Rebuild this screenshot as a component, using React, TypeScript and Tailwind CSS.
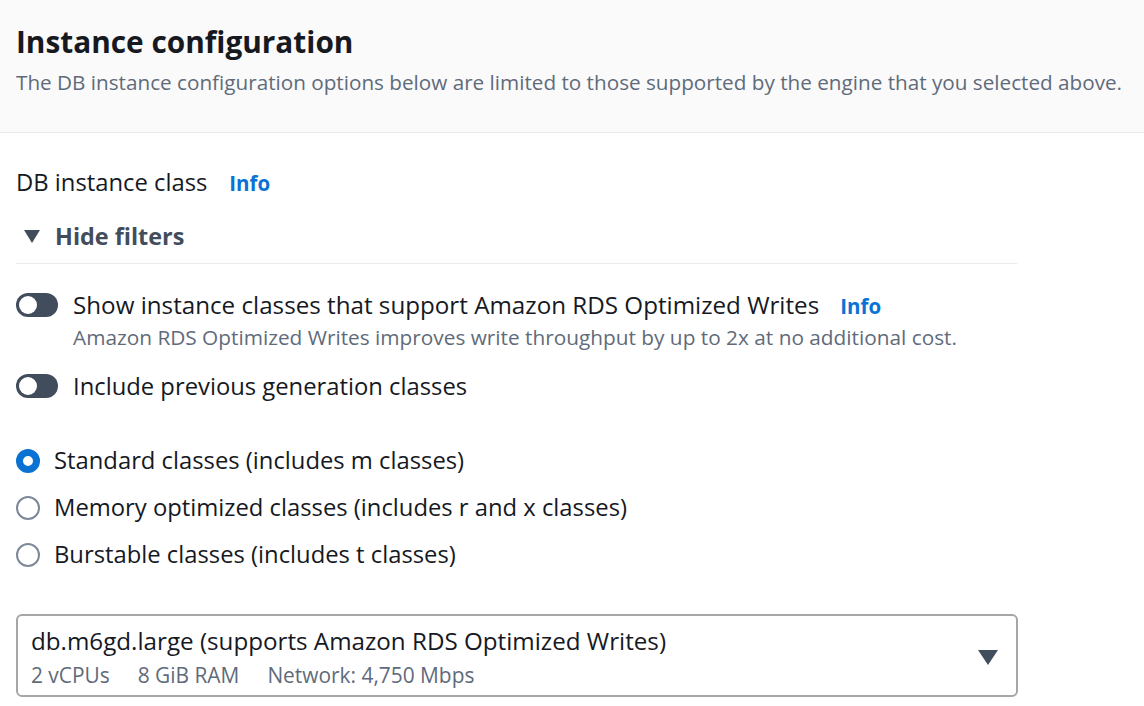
import React, { useState } from "react";

function Toggle({ on }: { on: boolean }) {
  return (
    <div
      className={`w-[42px] h-[24px] rounded-full flex items-center px-[3px] shrink-0 ${
        on ? "bg-[#0972d3] justify-end" : "bg-[#414d5c] justify-start"
      }`}
    >
      <div className="w-[18px] h-[18px] rounded-full bg-white" />
    </div>
  );
}

function Radio({ checked }: { checked: boolean }) {
  return checked ? (
    <div className="w-[24px] h-[24px] rounded-full border-[7px] border-[#0972d3] bg-white shrink-0" />
  ) : (
    <div className="w-[24px] h-[24px] rounded-full border-2 border-[#7d8998] bg-white shrink-0" />
  );
}

export default function App() {
  const [selected] = useState(0);
  const options = [
    "Standard classes (includes m classes)",
    "Memory optimized classes (includes r and x classes)",
    "Burstable classes (includes t classes)",
  ];
  return (
    <div className="w-[1144px] h-[706px] bg-white text-[#16191f] font-['Open_Sans',sans-serif] overflow-hidden">
      <div className="bg-[#fafafa] border-b border-[#e9ebed] px-[16px] pt-[22px] pb-[36px]">
        <h2 className="text-[29.8px] font-bold leading-[40px]">Instance configuration</h2>
        <p className="text-[20.7px] text-[#5f6b7a] leading-[28px] mt-[6px] whitespace-nowrap">
          The DB instance configuration options below are limited to those supported by the engine that you selected above.
        </p>
      </div>

      <div className="px-[16px] pt-[35px]">
        <div className="flex items-baseline gap-[22px] h-[28px]">
          <span className="text-[23.8px] leading-[28px]">DB instance class</span>
          <span className="text-[20.5px] leading-[28px] font-bold text-[#0972d3]">Info</span>
        </div>

        <div className="w-[1001px] mt-[26px] pb-[13px] border-b border-[#e9ebed] flex items-center gap-[15px]">
          <svg width="16" height="13" viewBox="0 0 16 13" className="ml-[8px]">
            <path d="M0 0h16L8 13z" fill="#414d5c" />
          </svg>
          <span className="text-[23.4px] font-bold text-[#414d5c] leading-[28px]">Hide filters</span>
        </div>

        <div className="mt-[27px] flex gap-[15px]">
          <div className="pt-[2px]">
            <Toggle on={false} />
          </div>
          <div>
            <div className="flex items-baseline gap-[21px] h-[28px]">
              <span className="text-[24.2px] leading-[28px] whitespace-nowrap">
                Show instance classes that support Amazon RDS Optimized Writes
              </span>
              <span className="text-[20.5px] leading-[28px] font-bold text-[#0972d3]">Info</span>
            </div>
            <div className="text-[20.8px] text-[#5f6b7a] leading-[28px] mt-[4px] whitespace-nowrap">
              Amazon RDS Optimized Writes improves write throughput by up to 2x at no additional cost.
            </div>
          </div>
        </div>

        <div className="mt-[21px] flex gap-[15px] items-center">
          <Toggle on={false} />
          <span className="text-[23.8px] leading-[28px]">Include previous generation classes</span>
        </div>

        <div className="mt-[46px] flex flex-col gap-[18px]">
          {options.map((o, i) => (
            <div key={o} className="flex items-center gap-[14px] h-[29px]">
              <Radio checked={i === selected} />
              <span className="text-[23.8px] leading-[29px]">{o}</span>
            </div>
          ))}
        </div>

        <div className="mt-[45px] w-[1002px] h-[83px] border-2 border-[#a6a6a6] rounded-[6px] pl-[13px] pr-[18px] pt-[10px] flex justify-between">
          <div>
            <div className="text-[24.2px] leading-[30px] whitespace-nowrap">
              db.m6gd.large (supports Amazon RDS Optimized Writes)
            </div>
            <div className="flex gap-[28px] text-[20.9px] text-[#5f6b7a] leading-[28px] mt-[5px]">
              <span>2 vCPUs</span>
              <span>8 GiB RAM</span>
              <span>Network: 4,750 Mbps</span>
            </div>
          </div>
          <svg width="20" height="15" viewBox="0 0 20 15" className="mt-[24px]">
            <path d="M0 0h20L10 15z" fill="#414d5c" />
          </svg>
        </div>
      </div>
    </div>
  );
}
